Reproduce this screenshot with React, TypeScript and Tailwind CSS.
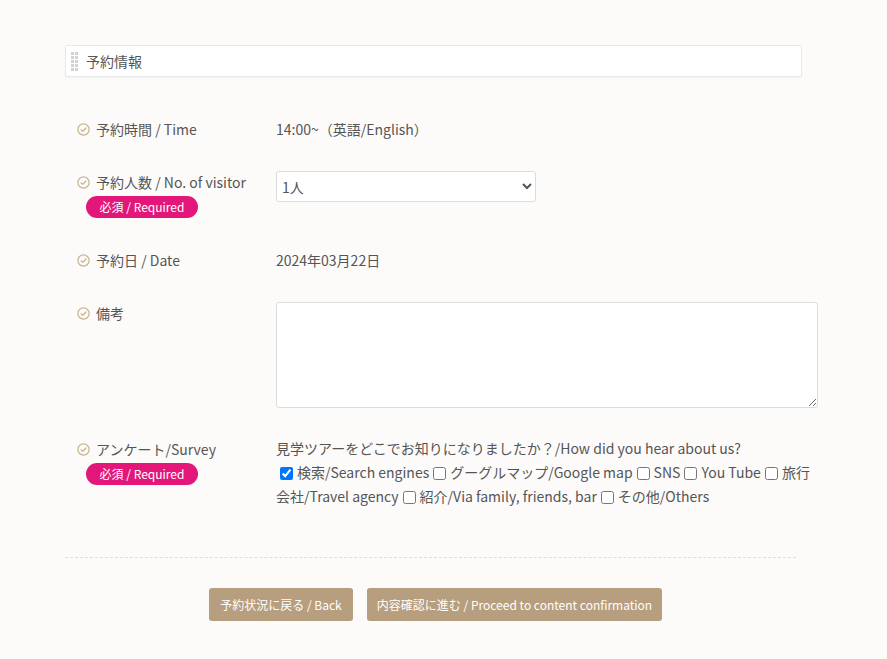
import React from "react";

const CheckCircle = () => (
  <svg width="13" height="13" viewBox="0 0 13 13" className="shrink-0 mt-[4px]">
    <circle cx="6.5" cy="6.5" r="5.6" fill="none" stroke="#c9b38f" strokeWidth="1.2" />
    <path d="M4 6.8 L5.8 8.4 L9 5" fill="none" stroke="#c9b38f" strokeWidth="1.2" strokeLinecap="round" strokeLinejoin="round" />
  </svg>
);

const Badge = () => (
  <div className="ml-[9px] mt-[4px] w-[112px] h-[22px] rounded-full bg-[#e3177a] text-white text-[12px] leading-[22px] text-center">
    必須 / Required
  </div>
);

const Label = ({ text, required }: { text: string; required?: boolean }) => (
  <div className="w-[211px] shrink-0 pl-[12px]">
    <div className="flex items-start gap-[6px] h-[20px] leading-[20px]">
      <CheckCircle />
      <span>{text}</span>
    </div>
    {required && <Badge />}
  </div>
);

const Check = ({ checked }: { checked?: boolean }) => (
  <input
    type="checkbox"
    defaultChecked={checked}
    className="w-[13px] h-[13px] align-[-2px] mx-[4px]"
  />
);

export default function App() {
  return (
    <div
      className="min-h-[659px] bg-[#fcfbfa] text-[#555] text-[14px] pt-[45px] pl-[65px]"
      style={{ fontFamily: '"Noto Sans CJK JP", "Noto Sans", sans-serif' }}
    >
      <div className="w-[737px] h-[32px] bg-white border border-[#e9e9e9] rounded-[2px] shadow-[0_1px_2px_rgba(0,0,0,0.04)] flex items-center">
        <div className="grid grid-cols-2 gap-x-[1px] gap-y-[1px] ml-[5px] mr-[8px]">
          {Array.from({ length: 10 }).map((_, i) => (
            <span key={i} className="block w-[3px] h-[3px] bg-[#d2d2d2]" />
          ))}
        </div>
        <span className="leading-[20px]">予約情報</span>
      </div>

      <div className="w-[753px] flex flex-col gap-[32px] mt-[42px]">
        <div className="flex items-start">
          <Label text="予約時間 / Time" />
          <div className="leading-[20px]">14:00~（英語/English）</div>
        </div>

        <div className="flex items-start">
          <div className="pt-[1px]">
            <Label text="予約人数 / No. of visitor" required />
          </div>
          <select className="w-[260px] h-[31px] border border-[#dcdcdc] rounded-[3px] bg-white px-[1px] text-[14px] text-[#555]">
            <option>1人</option>
          </select>
        </div>

        <div className="flex items-start">
          <Label text="予約日 / Date" />
          <div className="leading-[20px]">2024年03月22日</div>
        </div>

        <div className="flex items-start">
          <div className="pt-[1px]">
            <Label text="備考" />
          </div>
          <textarea className="w-[542px] h-[106px] border border-[#dcdcdc] rounded-[3px] bg-white" />
        </div>

        <div className="flex items-start -mt-[1px]">
          <Label text="アンケート/Survey" required />
          <div className="w-[542px] leading-[24px] -mt-[3px]">
            <div>見学ツアーをどこでお知りになりましたか？/How did you hear about us?</div>
            <div>
              <Check checked />検索/Search engines
              <Check />グーグルマップ/Google map
              <Check />SNS
              <Check />You Tube
              <Check />旅行会社/Travel agency
              <Check />紹介/Via family, friends, bar
              <Check />その他/Others
            </div>
          </div>
        </div>
      </div>

      <div className="w-[731px] border-t border-dashed border-[#dedede] mt-[49px]" />

      <div className="w-[737px] flex justify-center gap-[14px] mt-[30px] pl-[4px]">
        <button className="w-[144px] h-[33px] bg-[#b69e7e] text-white text-[12px] rounded-[3px]">
          予約状況に戻る / Back
        </button>
        <button className="w-[295px] h-[33px] bg-[#b69e7e] text-white text-[12px] rounded-[3px]">
          内容確認に進む / Proceed to content confirmation
        </button>
      </div>
    </div>
  );
}
